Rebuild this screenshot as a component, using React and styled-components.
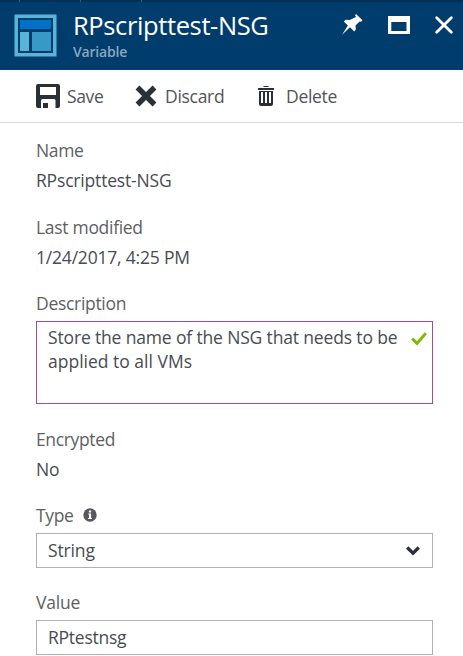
import React from "react";
import styled, { createGlobalStyle } from "styled-components";

const GlobalStyle = createGlobalStyle`
  * { box-sizing: border-box; }
  html, body { margin: 0; padding: 0; background: #fff; overflow: hidden; }
  body { font-family: "Open Sans", "Noto Sans", sans-serif; color: #474c53; }
`;

const Blade = styled.main`
  width: 463px;
  height: 656px;
  overflow: hidden;
  background: #fff;
`;

const Header = styled.header`
  display: flex;
  height: 70px;
  padding: 0 10px 0 14px;
  background:
    linear-gradient(#33597a, #33597a) 19px 0 / 1px 2px no-repeat,
    linear-gradient(#33597a, #33597a) 80px 0 / 1px 2px no-repeat,
    linear-gradient(#33597a, #33597a) 141px 0 / 1px 2px no-repeat,
    linear-gradient(#033156 0 2px, #003c6c 2px);
  color: #fff;
`;

const HeaderIcon = styled.svg`
  flex: none;
  margin-top: 14px;
`;

const Heading = styled.div`
  flex: 1;
  margin-left: 16px;
  padding-top: 7px;
`;

const Title = styled.h1`
  margin: 0;
  font-size: 25.5px;
  font-weight: 400;
  line-height: 36px;
  white-space: nowrap;
  letter-spacing: ${(p) => p.$track}px;
`;

const Subtitle = styled.div`
  font-size: 14px;
  font-weight: 600;
  line-height: 18px;
  color: #8ba7c0;
  letter-spacing: ${(p) => p.$track}px;
`;

const WindowControls = styled.div`
  display: flex;
  align-items: flex-start;
  padding-top: 14px;
`;

const ControlIcon = styled.svg`
  display: block;
  margin-left: ${(p) => p.$gap || 0}px;
`;

const Toolbar = styled.nav`
  display: flex;
  align-items: center;
  height: 53px;
  padding-left: 36px;
  border-bottom: 1px solid #dcdcdc;
`;

const Command = styled.button`
  display: flex;
  align-items: center;
  width: ${(p) => p.$width}px;
  padding: 0;
  border: 0;
  background: none;
  font: 400 17.5px/24px "Open Sans", sans-serif;
  color: #50545a;
`;

const CommandIcon = styled.svg`
  flex: none;
  margin-right: ${(p) => p.$gap}px;
`;

const Form = styled.section`
  display: flex;
  flex-direction: column;
  padding: 12px 30px 0 36px;
`;

const Field = styled.div`
  margin-bottom: ${(p) => p.$after}px;
`;

const Label = styled.div`
  display: flex;
  height: ${(p) => p.$height || 30}px;
  font-size: 17.5px;
  line-height: 30px;
  color: #5e6064;
  white-space: nowrap;
`;

const Value = styled.div`
  height: 30px;
  font-size: 17.5px;
  line-height: 30px;
  white-space: nowrap;
`;

const Tracked = styled.span`
  letter-spacing: ${(p) => p.$track}px;
`;

const InputBox = styled.div`
  display: flex;
  justify-content: space-between;
  align-items: center;
  height: 35px;
  padding: 0 12px 2px 11px;
  border: 1px solid #afb1b4;
  font-size: 17.5px;
`;

const TextBox = styled.div`
  display: flex;
  justify-content: space-between;
  height: 83px;
  padding: 3px 5px 0 11px;
  border: 1px solid #9b4f9b;
  font-size: 17.5px;
  line-height: 24px;
  white-space: nowrap;
`;

const InfoIcon = styled.svg`
  margin: 8px 0 0 9px;
`;

const CheckIcon = styled.svg`
  margin-top: 7px;
`;

const ChevronIcon = styled.svg`
  margin-top: 2px;
`;

export default function App() {
  return (
    <>
      <GlobalStyle />
      <Blade>
        <Header>
          <HeaderIcon width="43" height="43" viewBox="0 0 43 43">
            <path fill="#59b4d9" fillRule="evenodd" d="M.5.5h42v42H.5zM4 4v35h35V4z" />
            <path fill="#0072c6" d="M6 6h31v9H6z" />
            <path fill="#59b4d9" d="M6 18h9v19H6z" />
            <path fill="#3999c6" d="M18 18h19v19H18z" />
          </HeaderIcon>
          <Heading>
            <Title $track={-0.38}>RPscripttest-NSG</Title>
            <Subtitle $track={-0.2}>Variable</Subtitle>
          </Heading>
          <WindowControls>
            <ControlIcon width="21" height="21" viewBox="0 0 21 21">
              <path fill="#fff" d="M14 0l6.5 6.3-1.5 1.5-1.4-.4-4.1 4.2.3 3.8-1.6 2-4.2-4.2L0 20.8l5.9-9.4-4.1-4 1.8-1.7 4.1.4L14 3l-.9-1.5z" />
            </ControlIcon>
            <ControlIcon $gap={25} width="22" height="20" viewBox="0 0 22 20">
              <path fill="#fff" fillRule="evenodd" d="M0 2h22v18H0zM3.3 8v9h15.2V8z" />
            </ControlIcon>
            <ControlIcon $gap={25} width="18" height="21" viewBox="0 0 18 21">
              <path stroke="#fff" strokeWidth="2.8" strokeLinecap="round" d="M1.7 3.7l14.6 14.6M16.3 3.7L1.7 18.3" />
            </ControlIcon>
          </WindowControls>
        </Header>
        <Toolbar>
          <Command $width={99}>
            <CommandIcon $gap={7} width="24" height="24" viewBox="0 0 24 24">
              <path fill="#2b2f38" fillRule="evenodd" d="M2 0h20q2 0 2 2v20q0 2-2 2h-2.5v-7.5q0-1.5-1.5-1.5H6.5q-1.5 0-1.5 1.5V24H2q-2 0-2-2V2Q0 0 2 0zM4 3v7.5q0 .5.5.5h15q.5 0 .5-.5V3zM7 19h5v5H7z" />
            </CommandIcon>
            <Tracked $track={-0.35}>Save</Tracked>
          </Command>
          <Command $width={123}>
            <CommandIcon $gap={8} width="22" height="22" viewBox="0 0 22 22">
              <path stroke="#2b2f38" strokeWidth="5.4" d="M2.5 2.5l17 17M19.5 2.5l-17 17" />
            </CommandIcon>
            <Tracked $track={-0.3}>Discard</Tracked>
          </Command>
          <Command $width={90}>
            <CommandIcon $gap={12} width="16" height="20" viewBox="0 0 16 20">
              <path fill="#2b2f38" fillRule="evenodd" d="M5.5 0h5v1h-5zM0 2h16v2H0zM1 5h14v13q0 2-2 2H3q-2 0-2-2zM3 6v11h2V6zM7 6v11h2V6zM11 6v11h2V6z" />
            </CommandIcon>
            <Tracked $track={-0.3}>Delete</Tracked>
          </Command>
        </Toolbar>
        <Form>
          <Field $after={17}>
            <Label><Tracked $track={-0.35}>Name</Tracked></Label>
            <Value><Tracked $track={-0.18}>RPscripttest-NSG</Tracked></Value>
          </Field>
          <Field $after={16}>
            <Label><Tracked $track={-0.3}>Last modified</Tracked></Label>
            <Value><Tracked $track={-0.2}>1/24/2017, 4:25 PM</Tracked></Value>
          </Field>
          <Field $after={20}>
            <Label $height={33}><Tracked $track={-0.3}>Description</Tracked></Label>
            <TextBox>
              <div>
                <Tracked $track={-0.155}>Store the name of the NSG that needs to be</Tracked><br />
                <Tracked $track={0}>applied to all VMs</Tracked>
              </div>
              <CheckIcon width="16" height="14" viewBox="0 0 16 14">
                <path fill="none" stroke="#7fba00" strokeWidth="3" d="M1.2 6.6L6 11.4 14.8 1.3" />
              </CheckIcon>
            </TextBox>
          </Field>
          <Field $after={16}>
            <Label><Tracked $track={-0.35}>Encrypted</Tracked></Label>
            <Value><Tracked $track={-0.1}>No</Tracked></Value>
          </Field>
          <Field $after={19}>
            <Label $height={33}>
              <Tracked $track={-0.35}>Type</Tracked>
              <InfoIcon width="14" height="14" viewBox="0 0 14 14">
                <circle cx="7" cy="7" r="6.7" fill="#55585c" />
                <path fill="#fff" d="M5.9 2.6h2.2v1.8H5.9zM5.2 5.4h2.9v4.7h.9v1H5.1v-1H6V6.4h-.8z" />
              </InfoIcon>
            </Label>
            <InputBox>
              <Tracked $track={-0.15}>String</Tracked>
              <ChevronIcon width="14" height="10" viewBox="0 0 14 10">
                <path fill="none" stroke="#2b2f38" strokeWidth="3.2" d="M1.2 1.5L7 7.2l5.8-5.7" />
              </ChevronIcon>
            </InputBox>
          </Field>
          <Field $after={0}>
            <Label $height={33}><Tracked $track={-0.2}>Value</Tracked></Label>
            <InputBox><Tracked $track={-0.25}>RPtestnsg</Tracked></InputBox>
          </Field>
        </Form>
      </Blade>
    </>
  );
}
